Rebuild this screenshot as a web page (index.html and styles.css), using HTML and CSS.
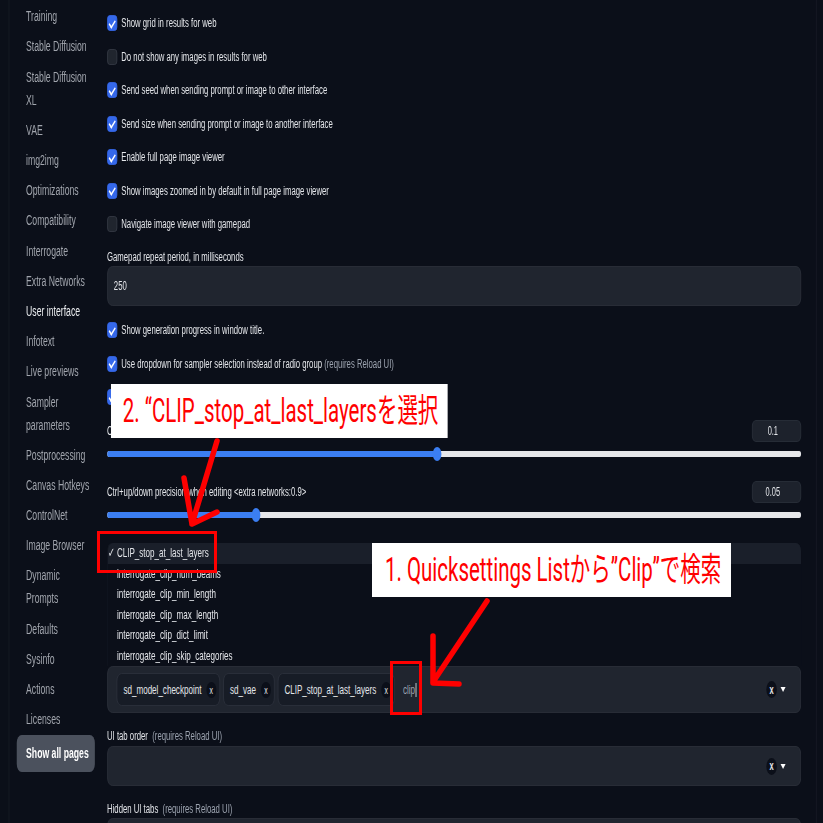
FILE: index.html
```html
<!DOCTYPE html>
<html lang="en">
<head>
    <meta charset="UTF-8">
    <meta name="viewport" content="width=device-width, initial-scale=1.0">
    <title>Settings - User interface</title>
    <link rel="stylesheet" href="styles.css">
</head>
<body>
<div class="app">
    <div class="frame">
        <div class="sidebar">
            <div class="tab">Training</div>
            <div class="tab">Stable Diffusion</div>
            <div class="tab">Stable Diffusion<br>XL</div>
            <div class="tab">VAE</div>
            <div class="tab">img2img</div>
            <div class="tab">Optimizations</div>
            <div class="tab">Compatibility</div>
            <div class="tab">Interrogate</div>
            <div class="tab">Extra Networks</div>
            <div class="tab active">User interface</div>
            <div class="tab">Infotext</div>
            <div class="tab">Live previews</div>
            <div class="tab">Sampler<br>parameters</div>
            <div class="tab">Postprocessing</div>
            <div class="tab">Canvas Hotkeys</div>
            <div class="tab">ControlNet</div>
            <div class="tab">Image Browser</div>
            <div class="tab">Dynamic<br>Prompts</div>
            <div class="tab">Defaults</div>
            <div class="tab">Sysinfo</div>
            <div class="tab">Actions</div>
            <div class="tab">Licenses</div>
            <button class="show-all">Show all pages</button>
        </div>

        <div class="settings">
            <div class="group">
                <label class="check on"><span class="box"></span>Show grid in results for web</label>
                <label class="check"><span class="box"></span>Do not show any images in results for web</label>
                <label class="check on"><span class="box"></span>Send seed when sending prompt or image to other interface</label>
                <label class="check on"><span class="box"></span>Send size when sending prompt or image to another interface</label>
                <label class="check on"><span class="box"></span>Enable full page image viewer</label>
                <label class="check on"><span class="box"></span>Show images zoomed in by default in full page image viewer</label>
                <label class="check"><span class="box"></span>Navigate image viewer with gamepad</label>
            </div>

            <div class="field-label first">Gamepad repeat period, in milliseconds</div>
            <div class="textbox">250</div>

            <div class="group after-box">
                <label class="check on"><span class="box"></span>Show generation progress in window title.</label>
                <label class="check on"><span class="box"></span>Use dropdown for sampler selection instead of radio group&nbsp;<span class="hint">(requires Reload UI)</span></label>
                <label class="check on"><span class="box"></span></label>
            </div>

            <div class="slider-head">
                <span>Ctrl+up/down precision when editing (attention:1.1)</span>
                <span class="num">0.1</span>
            </div>
            <div class="track"><div class="fill" style="width: 47.6%"></div></div>

            <div class="slider-head second">
                <span>Ctrl+up/down precision when editing &lt;extra networks:0.9&gt;</span>
                <span class="num">0.05</span>
            </div>
            <div class="track"><div class="fill" style="width: 21.5%"></div></div>

            <div class="multi quick">
                <div class="menu">
                    <div class="opt sel">CLIP_stop_at_last_layers</div>
                    <div class="opt">interrogate_clip_num_beams</div>
                    <div class="opt">interrogate_clip_min_length</div>
                    <div class="opt">interrogate_clip_max_length</div>
                    <div class="opt">interrogate_clip_dict_limit</div>
                    <div class="opt">interrogate_clip_skip_categories</div>
                </div>
                <span class="chip">sd_model_checkpoint<span class="x">x</span></span>
                <span class="chip">sd_vae<span class="x">x</span></span>
                <span class="chip">CLIP_stop_at_last_layers<span class="x">x</span></span>
                <span class="typed">clip<span class="caret"></span></span>
                <span class="controls"><span class="x big">x</span><span class="arrow"></span></span>
            </div>

            <div class="field-label spaced">UI tab order&nbsp;&nbsp;<span class="hint">(requires Reload UI)</span></div>
            <div class="multi empty">
                <span class="controls"><span class="x big">x</span><span class="arrow"></span></span>
            </div>

            <div class="field-label spaced">Hidden UI tabs&nbsp;&nbsp;<span class="hint">(requires Reload UI)</span></div>
            <div class="multi empty low"></div>
        </div>
    </div>

    <div class="note note-2">2. “CLIP_stop_at_last_layersを選択</div>
    <div class="note note-1">1. Quicksettings Listから”Clip”で検索</div>
</div>

<svg class="marks" width="823" height="823" viewBox="0 0 823 823">
    <g fill="none" stroke="#ff0000" stroke-width="3">
        <rect x="98.5" y="532.5" width="117" height="39"/>
        <rect x="391.5" y="662.5" width="29" height="51"/>
    </g>
    <g fill="none" stroke="#ff0000" stroke-width="5.5" stroke-linecap="round" stroke-linejoin="round">
        <path d="M217 441 L192 524 M184 478 L192 524 L217 512"/>
        <path d="M487 601 L433 682 M433 636 L433 683 L459 684"/>
    </g>
</svg>
</body>
</html>
```

FILE: styles.css
```css
body {
    margin: 0;
    background-color: #0b0f19;
    overflow: hidden;
    font-family: "Liberation Sans", Arial, sans-serif;
}

/* the screenshot is squeezed sideways, so the page is laid out wide and scaled */
.app {
    position: relative;
    width: 1328px;
    transform: scaleX(0.62);
    transform-origin: 0 0;
}

.frame {
    display: flex;
    margin-left: 14px;
    width: 1303px;
    min-height: 900px;
    box-sizing: border-box;
    border-left: 1px solid #1b1f29;
    border-right: 1px solid #1b1f29;
}

.sidebar {
    flex: none;
    width: 157.6px;
    box-sizing: border-box;
    padding: 1.7px 12px 0 12px;
}

.tab {
    padding: 3.6px 0 3.6px 15px;
    line-height: 23px;
    font-size: 14px;
    color: #a1a5ad;
}

.tab.active {
    color: #eceef1;
}

.show-all {
    display: block;
    width: 126px;
    height: 37px;
    padding: 0 0 0 15px;
    border: 0;
    border-radius: 8px;
    background-color: #4b515d;
    color: #ffffff;
    font-family: "Liberation Sans", Arial, sans-serif;
    font-size: 14px;
    font-weight: bold;
    text-align: left;
}

.settings {
    flex: none;
    width: 1119.4px;
    padding-top: 6.25px;
    font-size: 12.5px;
    color: #e4e6ea;
}

.check {
    display: flex;
    align-items: center;
    height: 33.5px;
    white-space: nowrap;
}

.box {
    flex: none;
    position: relative;
    width: 16px;
    height: 16px;
    box-sizing: border-box;
    margin-right: 7px;
    border: 1px solid #363c47;
    border-radius: 4px;
    background-color: #20252e;
}

.on .box {
    border-color: #3568ea;
    background-color: #3568ea;
}

.on .box::after {
    content: "";
    position: absolute;
    left: 4.5px;
    top: 1.5px;
    width: 4px;
    height: 8px;
    border: solid #ffffff;
    border-width: 0 2px 2px 0;
    transform: rotate(45deg);
}

.hint {
    color: #9ca3af;
}

.field-label {
    line-height: 16px;
    white-space: nowrap;
}

.field-label.first {
    margin-top: 8.25px;
}

.field-label.spaced {
    margin-top: 15px;
}

.textbox {
    display: flex;
    align-items: center;
    height: 40px;
    box-sizing: border-box;
    margin-top: 1px;
    padding-left: 10px;
    border: 1px solid #2c323c;
    border-radius: 8px;
    background-color: #20252f;
}

.group.after-box {
    margin-top: 7.25px;
}

.slider-head {
    display: flex;
    justify-content: space-between;
    align-items: center;
    margin-top: 6.25px;
    white-space: nowrap;
}

.slider-head.second {
    margin-top: 24px;
}

.num {
    width: 79px;
    height: 22px;
    box-sizing: border-box;
    padding-right: 12px;
    border: 1px solid #2b313c;
    border-radius: 6px;
    background-color: #1d222c;
    line-height: 20px;
    font-size: 12px;
    text-align: center;
}

.track {
    height: 6px;
    margin-top: 9px;
    border-radius: 3px;
    background-color: #e6e7ea;
}

.fill {
    position: relative;
    height: 100%;
    border-radius: 3px;
    background-color: #3b7ef2;
}

.fill::after {
    content: "";
    position: absolute;
    right: -7px;
    top: -4px;
    width: 14px;
    height: 14px;
    border-radius: 50%;
    background-color: #3b7ef2;
}

.multi {
    position: relative;
    display: flex;
    align-items: center;
    height: 47px;
    box-sizing: border-box;
    margin-top: 3px;
    padding: 0 24px 0 14.5px;
    border: 1px solid #2c323c;
    border-radius: 8px;
    background-color: #20252f;
}

/* the settings under the open list are hidden by it */
.multi.quick {
    margin-top: 148px;
}

.multi.empty {
    height: 40px;
    margin-top: 2px;
}

.multi.low {
    margin-top: 1px;
}

.chip {
    display: inline-flex;
    align-items: center;
    height: 33px;
    box-sizing: border-box;
    margin-right: 5px;
    padding: 0 5px 0 10px;
    border: 1px solid #2c323d;
    border-radius: 8px;
    background-color: #171c26;
    font-size: 13px;
    white-space: nowrap;
}

.x {
    display: inline-flex;
    justify-content: center;
    align-items: center;
    width: 16px;
    height: 16px;
    margin-left: 8px;
    border-radius: 50%;
    background-color: #0b0f19;
    color: #e4e6ea;
    font-size: 11px;
}

.x.big {
    width: 17px;
    height: 17px;
    margin-left: 0;
    font-size: 12px;
    font-weight: bold;
}

.typed {
    display: inline-flex;
    align-items: center;
    margin-left: 8px;
    font-size: 13px;
    color: #9ca3af;
}

.caret {
    width: 2px;
    height: 14px;
    margin-left: 1px;
    background-color: #9ca3af;
}

.controls {
    display: flex;
    align-items: center;
    gap: 6px;
    margin-left: auto;
}

.arrow {
    width: 0;
    height: 0;
    border-top: 5px solid #ffffff;
    border-left: 4px solid transparent;
    border-right: 4px solid transparent;
}

/* open dropdown of the quicksettings box */
.menu {
    position: absolute;
    z-index: 2;
    left: -1px;
    right: -1px;
    bottom: calc(100% + 1px);
    border-left: 1px solid #1a1f29;
    border-radius: 8px 8px 0 0;
    background-color: #0b0f19;
    font-size: 13px;
    color: #e4e6ea;
}

.opt {
    height: 20.5px;
    line-height: 20.5px;
    padding-left: 15px;
    white-space: nowrap;
}

.opt.sel {
    border-radius: 8px 8px 0 0;
    background-color: #1a1f2a;
}

.opt.sel::before {
    content: "✓";
    display: inline-block;
    width: 14px;
    margin-left: -14px;
}

/* white callouts pasted on the screenshot */
.note {
    position: absolute;
    z-index: 3;
    height: 54px;
    box-sizing: border-box;
    background-color: #ffffff;
    color: #ff0000;
    font-family: Roboto, "Noto Sans CJK JP", sans-serif;
    font-size: 33px;
    line-height: 54px;
    white-space: nowrap;
}

.note-2 {
    left: 179px;
    top: 384px;
    width: 543px;
    padding-left: 19px;
}

.note-1 {
    left: 600px;
    top: 543px;
    width: 579px;
    padding-left: 21px;
}

.marks {
    position: absolute;
    top: 0;
    left: 0;
    z-index: 4;
}
```
